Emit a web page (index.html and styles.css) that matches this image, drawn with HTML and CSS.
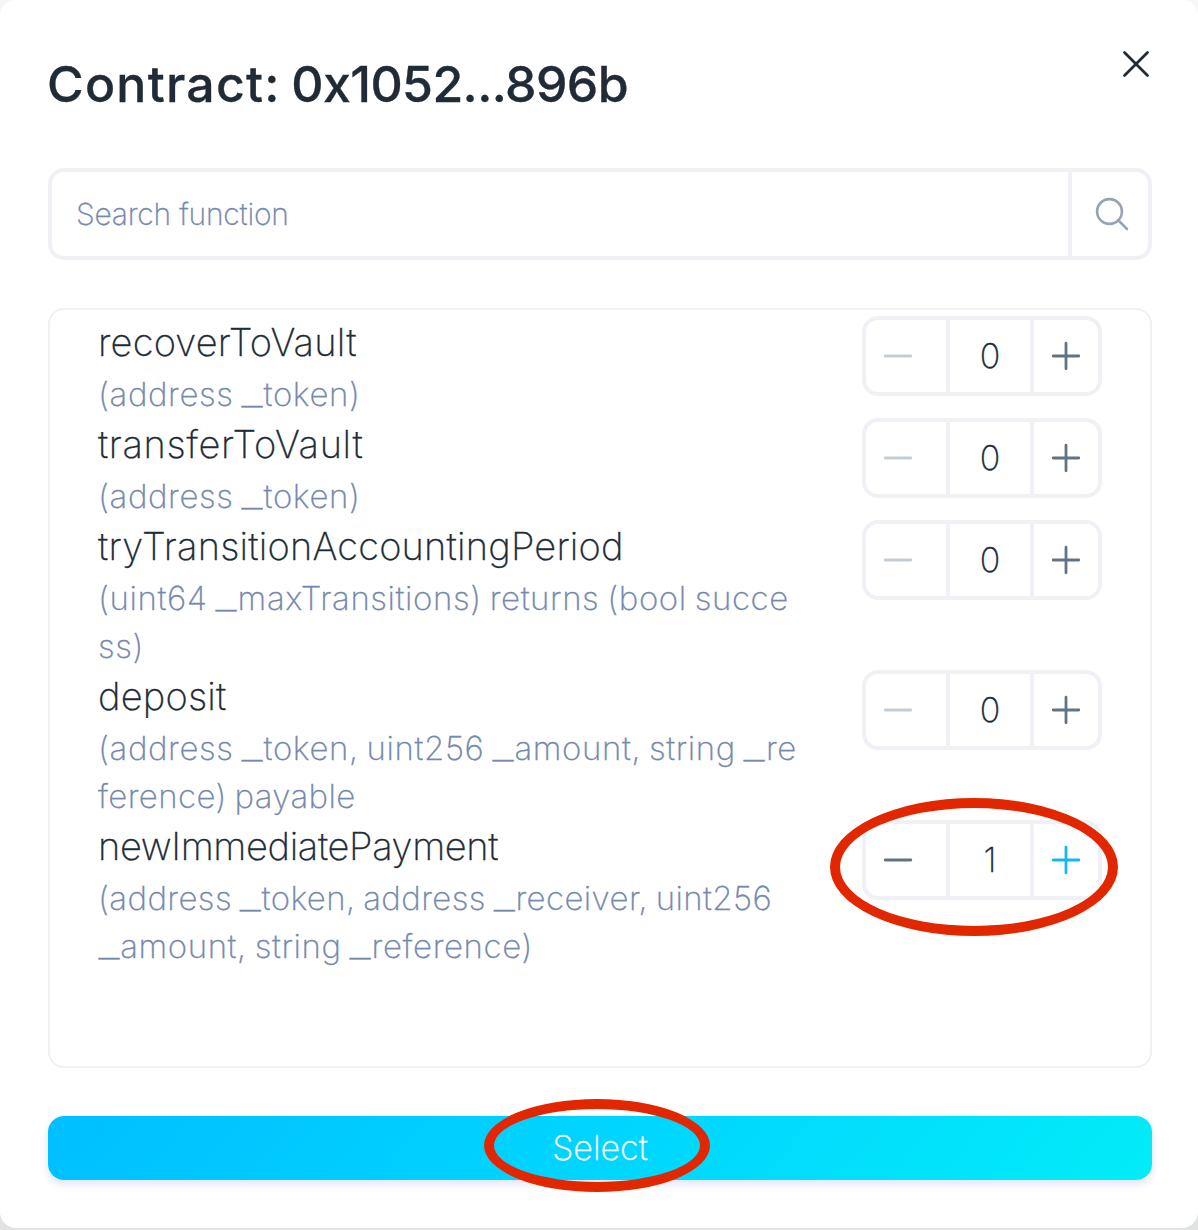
FILE: index.html
```html
<!DOCTYPE html>
<html lang="en">
  <head>
    <meta charset="UTF-8" />
    <meta name="viewport" content="width=device-width, initial-scale=1.0" />
    <title>Contract</title>
    <link rel="stylesheet" href="styles.css">
  </head>
  <body>
    <svg class="sprite">
      <symbol id="minus" viewBox="0 0 32 32">
        <path d="M3.2 16H28.8" />
      </symbol>
      <symbol id="plus" viewBox="0 0 32 32">
        <path d="M3.2 16H28.8M16 3.2V28.8" />
      </symbol>
    </svg>
    <div class="modal">
      <div class="header">
        <h1>Contract: <span class="address">0x1052...896b</span></h1>
        <button class="close" aria-label="Close">
          <svg class="icon" viewBox="0 0 32 32"><path d="M4.5 4.5L27.5 27.5M27.5 4.5L4.5 27.5" /></svg>
        </button>
      </div>
      <div class="search">
        <div class="search-input">Search function</div>
        <div class="search-button">
          <svg class="search-icon" viewBox="0 0 40 40"><circle cx="17.5" cy="17.5" r="12.4" /><path d="M26.5 26.5L35 35" /></svg>
        </div>
      </div>
      <ul class="functions">
        <li>
          <div class="function">
            <div class="name">recoverToVault</div>
            <div class="signature">(address <span class="bar">_</span>token)</div>
          </div>
          <div class="stepper">
            <div class="step off"><svg class="icon"><use href="#minus" /></svg></div>
            <div class="count">0</div>
            <div class="step add"><svg class="icon"><use href="#plus" /></svg></div>
          </div>
        </li>
        <li>
          <div class="function">
            <div class="name wide">transferToVault</div>
            <div class="signature">(address <span class="bar">_</span>token)</div>
          </div>
          <div class="stepper">
            <div class="step off"><svg class="icon"><use href="#minus" /></svg></div>
            <div class="count">0</div>
            <div class="step add"><svg class="icon"><use href="#plus" /></svg></div>
          </div>
        </li>
        <li>
          <div class="function">
            <div class="name">tryTransitionAccountingPeriod</div>
            <div class="signature">(uint64 <span class="bar">_</span>maxTransitions) returns (bool succe<br>ss)</div>
          </div>
          <div class="stepper">
            <div class="step off"><svg class="icon"><use href="#minus" /></svg></div>
            <div class="count">0</div>
            <div class="step add"><svg class="icon"><use href="#plus" /></svg></div>
          </div>
        </li>
        <li>
          <div class="function">
            <div class="name">deposit</div>
            <div class="signature">(address <span class="bar">_</span>token, uint256 <span class="bar">_</span>amount, string <span class="bar">_</span>re<br><span class="snug">ference) payable</span></div>
          </div>
          <div class="stepper">
            <div class="step off"><svg class="icon"><use href="#minus" /></svg></div>
            <div class="count">0</div>
            <div class="step add"><svg class="icon"><use href="#plus" /></svg></div>
          </div>
        </li>
        <li>
          <div class="function">
            <div class="name tight">newImmediatePayment</div>
            <div class="signature"><span class="snug">(address <span class="bar">_</span>token, address <span class="bar">_</span>receiver, uint256</span><br><span class="bar">_</span>amount, string <span class="bar">_</span>reference)</div>
          </div>
          <div class="stepper">
            <div class="step"><svg class="icon"><use href="#minus" /></svg></div>
            <div class="count">1</div>
            <div class="step add active"><svg class="icon"><use href="#plus" /></svg></div>
            <div class="mark mark-stepper"></div>
          </div>
        </li>
      </ul>
      <button class="select">
        Select
        <span class="mark mark-select"></span>
      </button>
    </div>
  </body>
</html>
```
FILE: styles.css
```css
* {
  box-sizing: border-box;
}
body {
  margin: 0;
  height: 1230px;
  background: linear-gradient(#f6f7f8, #e1e2e3);
  font-family: "Inter", "Liberation Sans", sans-serif;
  font-weight: 200;
  -webkit-text-stroke: 0.3px;
  color: #212b36;
}
button {
  border: none;
  background: none;
  padding: 0;
  font: inherit;
}
ul {
  list-style-type: none;
  margin: 0;
  padding: 0;
}
svg {
  display: block;
  fill: none;
  stroke: currentColor;
  stroke-linecap: round;
}
.sprite {
  display: none;
}
.icon {
  width: 32px;
  height: 32px;
  stroke-width: 2.8;
}

.modal {
  display: flex;
  flex-direction: column;
  height: 1228px;
  padding: 48px 46px 48px 48px;
  border-radius: 16px;
  background: #fff;
}
.header {
  display: flex;
  justify-content: space-between;
  align-items: flex-start;
  height: 120px;
}
h1 {
  margin: 0 0 0 -1px;
  font-size: 50px;
  font-weight: 500;
  line-height: 72px;
  letter-spacing: 1.25px;
  word-spacing: -4px;
}
.address {
  letter-spacing: -0.6px;
}
.close {
  color: #212b36;
}

.search {
  display: flex;
  height: 92px;
  margin-bottom: 48px;
  border: 4px solid #f0f0f7;
  border-radius: 16px;
}
.search-input {
  flex: 1;
  padding-left: 24px;
  font-size: 30px;
  line-height: 84px;
  letter-spacing: -0.2px;
  color: #7588ad;
}
.search-button {
  display: flex;
  align-items: center;
  justify-content: center;
  width: 80px;
  padding-left: 4px;
  border-left: 4px solid #f0f0f7;
  color: #93a4b3;
}
.search-icon {
  width: 40px;
  height: 40px;
  stroke-width: 2.6;
}

.functions {
  height: 760px;
  padding: 6px 48px;
  border: 2px solid #f0f0f7;
  border-radius: 16px;
}
.functions li {
  display: flex;
  justify-content: space-between;
  align-items: flex-start;
}
.function {
  white-space: nowrap;
}
.name {
  height: 54px;
  font-size: 38px;
  line-height: 52px;
  letter-spacing: 0.2px;
}
.name.wide {
  letter-spacing: 0.65px;
}
.name.tight {
  letter-spacing: -0.35px;
}
.signature {
  font-size: 33px;
  line-height: 48px;
  letter-spacing: 0.6px;
  word-spacing: -2px;
  color: #7588ad;
}
.snug {
  letter-spacing: 0.4px;
}
/* the underscore is drawn wider than the font has it */
.bar {
  display: inline-block;
  margin: 0 3.5px;
  transform: scaleX(1.45);
}

.stepper {
  position: relative;
  display: flex;
  width: 240px;
  height: 80px;
  border: 4px solid #f0f0f7;
  border-radius: 16px;
}
.step {
  display: flex;
  align-items: center;
  width: 80px;
  padding-left: 16px;
  color: #637381;
}
.step.add {
  width: 64px;
}
.step.off {
  color: #c4cdd5;
}
.step.active {
  color: #13b9eb;
}
.count {
  width: 88px;
  border: solid #f0f0f7;
  border-width: 0 4px;
  font-size: 34px;
  line-height: 72px;
  text-align: center;
}

.select {
  position: relative;
  height: 64px;
  margin-top: 48px;
  border-radius: 16px;
  background: linear-gradient(130deg, #00bfff, #00d5ff 50%, #02ecf8);
  box-shadow: 0 4px 8px rgba(100, 120, 200, 0.2);
  font-size: 34px;
  line-height: 64px;
  color: #fff;
}

.mark {
  position: absolute;
  border: 10px solid #e22700;
  border-radius: 50%;
}
.mark-stepper {
  left: -36px;
  top: -26px;
  width: 288px;
  height: 138px;
}
.mark-select {
  left: 436px;
  top: -17px;
  width: 226px;
  height: 93px;
}
```
